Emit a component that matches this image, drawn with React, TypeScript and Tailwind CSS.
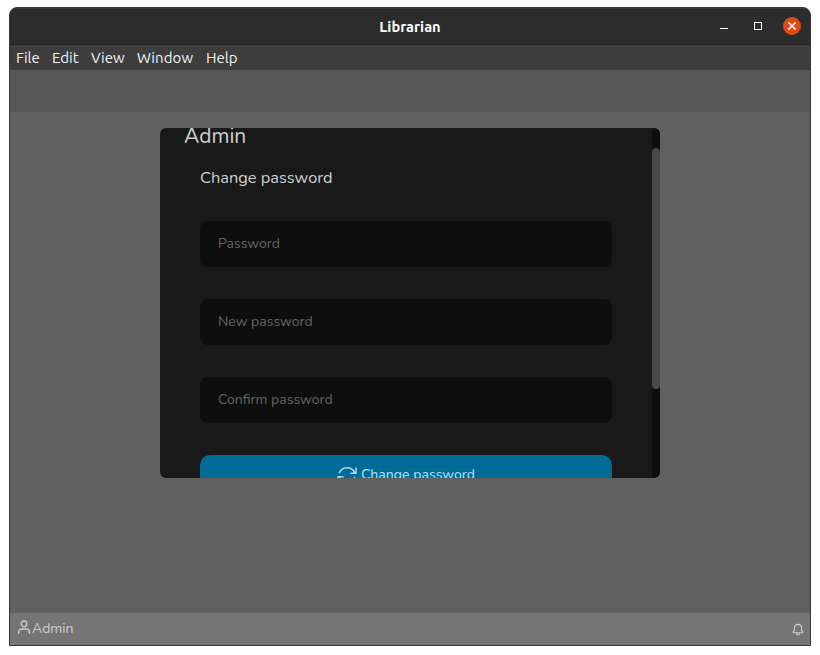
import React from "react";

const fields = ["Password", "New password", "Confirm password"];

function TitleBar() {
  return (
    <header className="relative flex h-[37px] shrink-0 items-center justify-end border-b border-[#252525] border-t border-t-[#393939] bg-[#2c2c2c] pr-[9px] text-white">
      <h1 className="absolute inset-x-0 top-[8px] text-center font-['Ubuntu','Noto_Sans',sans-serif] text-[14.67px] leading-5 font-bold">
        Librarian
      </h1>
      <div className="-mt-[2px] flex items-center">
        <span className="mt-[5px] mr-[26px] h-px w-2 bg-white" />
        <span className="mr-[21px] h-2 w-2 border border-white" />
        <span className="flex h-[18px] w-[18px] items-center justify-center rounded-full bg-[#e04a18]">
          <svg width="8" height="8" viewBox="0 0 8 8" stroke="currentColor" strokeWidth="1.5">
            <path d="M.4.4l7.2 7.2M7.6.4L.4 7.6" />
          </svg>
        </span>
      </div>
    </header>
  );
}

function MenuBar() {
  return (
    <nav className="flex h-[25px] shrink-0 items-center gap-3 bg-[#3d3d3d] pt-[2px] pl-[6px] font-['Ubuntu','Noto_Sans',sans-serif] text-[15px] text-[#f2f2f2]">
      <span className="w-6">File</span>
      <span className="w-[27px]">Edit</span>
      <span className="w-[34px]">View</span>
      <span className="w-[57px] tracking-[0.1px]">Window</span>
      <span>Help</span>
    </nav>
  );
}

function PasswordPanel() {
  return (
    <section className="flex h-[350px] w-[500px] overflow-hidden rounded-[6px] bg-[#191919]">
      <div className="h-full w-[492px] overflow-hidden pr-10 pl-10">
        <h2 className="-mt-[7px] -ml-4 h-[30px] text-[21px] leading-[30px] font-normal text-[#d0d0d0]">
          Admin
        </h2>
        <h3 className="mt-[15px] h-[23px] text-[16.38px] leading-6 text-[#d0d0d0]">Change password</h3>
        <form className="mt-8 flex flex-col gap-8">
          {fields.map((label) => (
            <div key={label} className="flex h-[46px] items-center rounded-lg bg-[#0e0e0e] px-[18px]">
              <span className="-mt-px text-[14px] leading-5 text-[#646464]">{label}</span>
            </div>
          ))}
          <button type="button" className="flex h-[46px] items-start justify-center gap-1 rounded-[10px] bg-[#006b96] pt-[8px] text-[14px] leading-[22px] font-medium text-[#a8dcf2]">
            <svg className="mt-[2px]" width="20" height="20" viewBox="0 0 20 20" fill="none" stroke="currentColor" strokeWidth="1.5">
              <path d="M2.2 8.3A8.3 8.3 0 0 1 17.8 8M19 2.6v5.7h-5.6M1 17.4v-5.7h5.6M17.8 11.7A8.3 8.3 0 0 1 2.2 12" />
            </svg>
            <span className="mt-px">Change password</span>
          </button>
        </form>
      </div>
      <div className="h-full w-2 rounded bg-[#0e0e0e] pt-5">
        <div className="h-[241px] w-2 rounded bg-[#484848]" />
      </div>
    </section>
  );
}

function StatusBar() {
  return (
    <footer className="flex h-8 shrink-0 items-center justify-between bg-[#757575] pr-[6px] pl-2 text-[#cdcdcd]">
      <div className="flex items-center">
        <svg className="-mt-[5px]" width="14" height="16" viewBox="0 0 14 16" fill="none" stroke="currentColor" strokeWidth="1.3">
          <circle cx="6" cy="4.8" r="2.8" />
          <path d="M.7 15v-1.8A3.2 3.2 0 0 1 3.9 10h4.2a3.2 3.2 0 0 1 3.2 3.2V15" />
        </svg>
        <span className="-mt-px text-[14px] leading-5">Admin</span>
      </div>
      <svg className="mt-px" width="12" height="13" viewBox="0 0 12 13" fill="none" stroke="currentColor" strokeWidth="1.1">
        <path d="M1.2 9.8V8.9L2.4 7.5V5.2C2.4 2.9 3.9 1.4 6 1.4s3.6 1.5 3.6 3.8v2.3l1.2 1.4v.9zM4.6 10v.7c0 .7.5 1.2 1.4 1.2s1.4-.5 1.4-1.2V10" />
      </svg>
    </footer>
  );
}

export default function App() {
  return (
    <div className="h-[655px] w-[820px] overflow-hidden bg-white pt-[7px] pl-[9px]">
      <div className="flex h-[639px] w-[802px] flex-col overflow-hidden rounded-t-[8px] border border-[#393939] bg-[#606060] font-['Nunito','Open_Sans',sans-serif]">
        <TitleBar />
        <MenuBar />
        <div className="h-[42px] shrink-0 bg-[#575757]" />
        <main className="flex flex-1 justify-center pt-4">
          <PasswordPanel />
        </main>
        <StatusBar />
      </div>
    </div>
  );
}
